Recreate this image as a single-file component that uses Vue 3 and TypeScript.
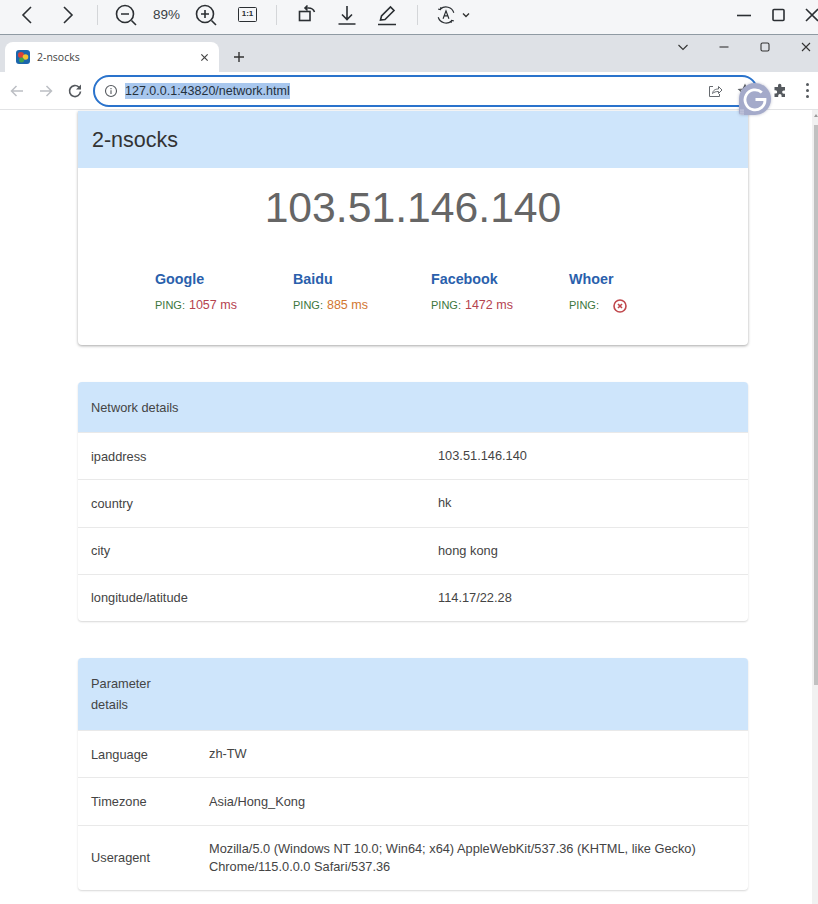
<script setup lang="ts">
interface PingTarget {
  name: string
  ms: number | null
  tone: 'slow' | 'mid' | 'fail'
}

interface DetailRow {
  label: string
  value: string
}

const ip = '103.51.146.140'

const targets: PingTarget[] = [
  { name: 'Google', ms: 1057, tone: 'slow' },
  { name: 'Baidu', ms: 885, tone: 'mid' },
  { name: 'Facebook', ms: 1472, tone: 'slow' },
  { name: 'Whoer', ms: null, tone: 'fail' },
]

const networkRows: DetailRow[] = [
  { label: 'ipaddress', value: ip },
  { label: 'country', value: 'hk' },
  { label: 'city', value: 'hong kong' },
  { label: 'longitude/latitude', value: '114.17/22.28' },
]

const paramRows: DetailRow[] = [
  { label: 'Language', value: 'zh-TW' },
  { label: 'Timezone', value: 'Asia/Hong_Kong' },
  {
    label: 'Useragent',
    value:
      'Mozilla/5.0 (Windows NT 10.0; Win64; x64) AppleWebKit/537.36 (KHTML, like Gecko) Chrome/115.0.0.0 Safari/537.36',
  },
]
</script>

<template>
  <div class="screen">
    <!-- image viewer toolbar -->
    <div class="viewer-bar">
      <svg class="vb vb-back" viewBox="0 0 24 24"><path d="M16 4l-8 8 8 8" /></svg>
      <svg class="vb vb-fwd" viewBox="0 0 24 24"><path d="M8 4l8 8-8 8" /></svg>
      <i class="vb-div vb-div1"></i>
      <svg class="vb vb-zoomout" viewBox="0 0 24 24">
        <circle cx="11" cy="11" r="8.5" /><path d="M7 11h8M17.5 17.5l4.5 4.5" />
      </svg>
      <span class="vb-pct">89%</span>
      <svg class="vb vb-zoomin" viewBox="0 0 24 24">
        <circle cx="11" cy="11" r="8.5" /><path d="M7 11h8M11 7v8M17.5 17.5l4.5 4.5" />
      </svg>
      <span class="vb-actual">1:1</span>
      <i class="vb-div vb-div2"></i>
      <svg class="vb vb-rotate" viewBox="0 0 24 24">
        <rect x="5.500" y="8.500" width="10.500" height="9" /><path d="M11 5h3.500c3 0 5 1.200 6 4M13.500 2.500L11 5l2.500 2.500" />
      </svg>
      <svg class="vb vb-down" viewBox="0 0 24 24">
        <path d="M12 3v13M7 11.500l5 5 5-5M3.500 21h17" />
      </svg>
      <svg class="vb vb-pen" viewBox="0 0 24 24">
        <path d="M5.500 17l1-4L15.500 4l3.500 3.500-9 9zM3 21.500h18" />
      </svg>
      <i class="vb-div vb-div3"></i>
      <svg class="vb vb-read" viewBox="0 0 24 24">
        <path class="thin" d="M20.500 9.500A9 9 0 0 0 6 5.500M3.500 14.500A9 9 0 0 0 18 18.500M3.500 5.500L6 6l.5-2.500M20.500 18.500L18 18l-.5 2.500" />
        <path class="thin" d="M8.800 16L12 7.500l3.200 8.500M10 13h4" />
      </svg>
      <svg class="vb-chev" viewBox="0 0 10 10"><path d="M2 3.500l3 3 3-3" /></svg>
      <svg class="vb vb-min" viewBox="0 0 24 24"><path d="M5 12.500h14" /></svg>
      <svg class="vb vb-max" viewBox="0 0 24 24"><rect x="6" y="6.500" width="11" height="11" rx="1" /></svg>
      <svg class="vb vb-close" viewBox="0 0 24 24"><path d="M6 6l12 12M18 6L6 18" /></svg>
    </div>

    <!-- tab strip -->
    <div class="tabstrip">
      <div class="tab">
        <svg class="favicon" viewBox="0 0 14 14">
          <rect width="14" height="14" rx="3" fill="#1b66ad" />
          <circle cx="5" cy="5" r="3" fill="#d8403a" />
          <circle cx="9.500" cy="7" r="2.800" fill="#f2c230" />
          <circle cx="5.500" cy="10" r="2.500" fill="#3fa34d" />
        </svg>
        <span class="tab-title">2-nsocks</span>
        <svg class="tab-x" viewBox="0 0 10 10"><path d="M1.500 1.500l7 7M8.500 1.500l-7 7" /></svg>
      </div>
      <svg class="tab-plus" viewBox="0 0 12 12"><path d="M6 1v10M1 6h10" /></svg>
      <svg class="win win-list" viewBox="0 0 12 12"><path d="M1.500 4l4.500 4.500L10.500 4" /></svg>
      <svg class="win win-min" viewBox="0 0 12 12"><path d="M1.500 6h9" /></svg>
      <svg class="win win-max" viewBox="0 0 12 12"><rect x="2" y="2" width="8" height="8" rx="1.500" /></svg>
      <svg class="win win-close" viewBox="0 0 12 12"><path d="M2 2l8 8M10 2l-8 8" /></svg>
    </div>

    <!-- address bar -->
    <div class="toolbar">
      <svg class="nav nav-back" viewBox="0 0 16 16"><path d="M14 8H2.500M7.500 3l-5 5 5 5" /></svg>
      <svg class="nav nav-fwd" viewBox="0 0 16 16"><path d="M2 8h11.500M8.500 3l5 5-5 5" /></svg>
      <svg class="nav nav-reload" viewBox="0 0 16 16">
        <path d="M13.500 8.500A5.500 5.500 0 1 1 11.800 4L13.500 5.700" /><path class="solid" d="M14 1.500V6.500H9z" />
      </svg>
      <div class="omnibox">
        <svg class="info" viewBox="0 0 14 14">
          <circle cx="7" cy="7" r="5.500" /><path d="M7 6.300v3.700M7 4v1.300" />
        </svg>
        <span class="url">127.0.0.1:43820/network.html</span>
        <svg class="share" viewBox="0 0 16 16">
          <path d="M6 3.500H2.500v10h10V11" /><path d="M5.500 10.500c.5-3.500 3-4.500 6-4.500V3.500L15 7l-3.500 3.500V8.500c-2.500 0-4.500.5-6 2z" />
        </svg>
        <svg class="star" viewBox="0 0 16 16"><path d="M8 2l1.800 4 4.200.4-3.200 2.800 1 4.200L8 11.200 4.200 13.400l1-4.200L2 6.400 6.200 6z" /></svg>
      </div>
      <svg class="puzzle" viewBox="0 0 16 16">
        <path d="M6 2.500a1.700 1.700 0 0 1 3.400 0V4h3.600v3.400h-1.200a1.700 1.700 0 0 0 0 3.400H13V14H9.600v-1.200a1.700 1.700 0 0 0-3.400 0V14H2.500v-3.400h1a1.700 1.700 0 0 0 0-3.400h-1V4H6z" />
      </svg>
      <div class="dots"><i></i><i></i><i></i></div>
    </div>

    <!-- floating G badge -->
    <div class="g-badge">
      <svg viewBox="0 0 32 32">
        <path d="M22.800 9.500A10 10 0 1 0 26 16.500h-9.500" />
        <g class="grip">
          <circle cx="2" cy="27" r=".6" /><circle cx="4" cy="27" r=".6" />
          <circle cx="2" cy="29" r=".6" /><circle cx="4" cy="29" r=".6" />
          <circle cx="2" cy="31" r=".6" /><circle cx="4" cy="31" r=".6" />
        </g>
      </svg>
    </div>

    <!-- page -->
    <div class="page">
      <main class="content">
        <section class="card card-main">
          <h1 class="main-title">2-nsocks</h1>
          <div class="big-ip">{{ ip }}</div>
          <div class="targets">
            <div v-for="t in targets" :key="t.name" class="target">
              <div class="target-name">{{ t.name }}</div>
              <div class="target-ping">
                <span class="ping-label">PING:</span>
                <span v-if="t.ms !== null" :class="['ping-val', t.tone]">{{ t.ms }} ms</span>
                <svg v-else class="ping-fail" viewBox="0 0 14 14">
                  <circle cx="7" cy="7" r="6" /><path d="M5 5l4 4M9 5l-4 4" />
                </svg>
              </div>
            </div>
          </div>
        </section>

        <section class="card card-table card-network">
          <div class="table-head">Network details</div>
          <div v-for="row in networkRows" :key="row.label" class="table-row">
            <div class="cell-label">{{ row.label }}</div>
            <div class="cell-value">{{ row.value }}</div>
          </div>
        </section>

        <section class="card card-table card-param">
          <div class="table-head"><div class="head-narrow">Parameter details</div></div>
          <div v-for="row in paramRows" :key="row.label" class="table-row">
            <div class="cell-label">{{ row.label }}</div>
            <div class="cell-value">{{ row.value }}</div>
          </div>
        </section>
      </main>
      <div class="scrollbar">
        <div class="scroll-arrow"></div>
        <div class="thumb"></div>
      </div>
    </div>
  </div>
</template>

<style>
html,
body {
  margin: 0;
  overflow: hidden;
  background: #fff;
}
</style>

<style scoped>
.screen {
  position: relative;
  width: 818px;
  height: 904px;
  overflow: hidden;
  display: flex;
  flex-direction: column;
  font-family: 'Liberation Sans', Arial, sans-serif;
  color: #444;
}

svg {
  display: block;
  flex-shrink: 0;
  fill: none;
}

/* viewer toolbar */
.viewer-bar {
  height: 34px;
  flex-shrink: 0;
  box-sizing: content-box;
  display: flex;
  align-items: center;
  height: 29px;
  padding: 0 0 5px 15px;
  background: #f5f6f8;
  border-bottom: 1px solid #8f9aa3;
}

.vb {
  width: 24px;
  height: 24px;
  stroke: #2b2f33;
  stroke-width: 1.600;
}

.vb-fwd { margin-left: 17px; }
.vb-div { width: 1px; height: 20px; background: #d4d6d9; }
.vb-div1 { margin-left: 17px; }
.vb-zoomout { margin-left: 16px; }
.vb-pct {
  margin-left: 15px;
  width: 28px;
  font-size: 13.500px;
  color: #3a3f44;
}
.vb-zoomin { margin-left: 13px; }
.vb-actual {
  margin-left: 20px;
  box-sizing: border-box;
  width: 19px;
  height: 15px;
  border: 1.500px solid #2b2f33;
  border-radius: 1.500px;
  font-size: 8px;
  font-weight: 700;
  line-height: 12px;
  text-align: center;
  color: #2b2f33;
}
.vb-div2 { margin-left: 19px; }
.vb-rotate { margin-left: 17px; }
.vb-down { margin-left: 17px; }
.vb-pen { margin-left: 16px; }
.vb-div3 { margin-left: 18px; }
.vb-read { margin-left: 17px; width: 22px; height: 22px; }
.vb-read .thin { stroke-width: 1.300; }
.vb-chev {
  width: 10px;
  height: 10px;
  margin-left: 4px;
  stroke: #333;
  stroke-width: 1.400;
}
.vb-min { margin-left: auto; }
.vb-max { margin-left: 11px; }
.vb-close { margin-left: 9px; margin-right: -6px; }

/* tab strip */
.tabstrip {
  height: 37px;
  flex-shrink: 0;
  display: flex;
  align-items: flex-end;
  background: #dee1e6;
  padding-left: 5px;
}

.tab {
  width: 214px;
  height: 30px;
  box-sizing: border-box;
  display: flex;
  align-items: center;
  padding: 0 10px 0 11px;
  background: #fff;
  border-radius: 8px 8px 0 0;
}

.favicon { width: 14px; height: 14px; }
.tab-title {
  margin-left: 7px;
  font-family: 'Open Sans', 'Liberation Sans', sans-serif;
  font-size: 10.500px;
  color: #444;
}
.tab-x {
  margin-left: auto;
  width: 9px;
  height: 9px;
  stroke: #444;
  stroke-width: 1.300;
}

.tab-plus {
  width: 12px;
  height: 12px;
  margin: 0 0 9px 14px;
  stroke: #333;
  stroke-width: 1.400;
}

.win {
  width: 12px;
  height: 12px;
  align-self: flex-start;
  margin-top: 6px;
  stroke: #333;
  stroke-width: 1.100;
}
.win-list { margin-left: auto; }
.win-min { margin-left: 29px; }
.win-max { margin-left: 29px; }
.win-close { margin-left: 29px; margin-right: 6px; }

/* address bar */
.toolbar {
  height: 38px;
  flex-shrink: 0;
  box-sizing: border-box;
  display: flex;
  align-items: center;
  padding-left: 9px;
  background: #fff;
  border-bottom: 1px solid #e2e3e5;
}

.nav {
  width: 16px;
  height: 16px;
  stroke: #bcbfc4;
  stroke-width: 1.500;
}
.nav-fwd { margin-left: 13px; }
.nav-reload { margin-left: 13px; stroke: #55595e; stroke-width: 1.700; }
.nav-reload .solid { fill: #55595e; stroke: none; }

.omnibox {
  width: 665px;
  height: 32px;
  margin-left: 10px;
  box-sizing: border-box;
  display: flex;
  align-items: center;
  padding-left: 9px;
  border: 2px solid #2a73cc;
  border-radius: 16px;
  background: #fff;
}

.info {
  width: 14px;
  height: 14px;
  stroke: #55595e;
  stroke-width: 1.100;
}

.url {
  margin-left: 7px;
  padding: 1px 0;
  background: #a8c7ee;
  font-size: 12.500px;
  color: #24303c;
}

.share {
  margin-left: auto;
  width: 16px;
  height: 16px;
  stroke: #666a6f;
  stroke-width: 1;
}

.star {
  width: 16px;
  height: 16px;
  margin: 0 3px 0 14px;
  stroke: #55595e;
  stroke-width: 1.200;
}

.puzzle {
  width: 16px;
  height: 16px;
  margin-left: 14px;
  fill: #55595e;
}

.dots {
  margin-left: 18px;
  display: flex;
  flex-direction: column;
  gap: 3px;
}
.dots i {
  width: 3px;
  height: 3px;
  border-radius: 50%;
  background: #55595e;
}

.g-badge {
  position: absolute;
  left: 739px;
  top: 83px;
  width: 32px;
  height: 32px;
  border-radius: 50% 50% 50% 3px;
  background: #a4aaca;
  box-shadow: 0 0 3px rgba(90, 95, 130, 0.4);
}
.g-badge svg {
  width: 32px;
  height: 32px;
  stroke: #fff;
  stroke-width: 2.800;
}
.g-badge .grip {
  fill: #fff;
  stroke: none;
}

/* page */
.page {
  flex: 1;
  min-height: 0;
  display: flex;
}

.content {
  flex: 1;
  min-width: 0;
  padding: 1px 0 0 78px;
}

.scrollbar {
  width: 6px;
  background: #f1f1f1;
}
.scroll-arrow {
  width: 0;
  height: 0;
  margin: 4px 0 0 2px;
  border: 2px solid transparent;
  border-top-width: 0;
  border-bottom: 3px solid #9a9a9a;
}
.thumb {
  height: 560px;
  margin: 8px 0 0 2px;
  background: #c1c1c1;
}

.card {
  width: 670px;
  background: #fff;
  border-radius: 4px;
  overflow: hidden;
}

.card-main {
  height: 234px;
  border-radius: 0 0 4px 4px;
  box-shadow: 0 1px 3px rgba(0, 0, 0, 0.35);
}

.main-title {
  height: 57px;
  margin: 0;
  padding-left: 14px;
  background: #cee5fb;
  font-size: 21.500px;
  font-weight: 400;
  line-height: 58px;
  color: #333;
}

.big-ip {
  margin-top: 10px;
  text-align: center;
  font-size: 42.700px;
  line-height: 58px;
  color: #666;
}

.targets {
  display: grid;
  grid-template-columns: repeat(4, 138px);
  margin: 33px 0 0 77px;
}

.target-name {
  font-size: 14.300px;
  font-weight: 700;
  line-height: 20px;
  color: #2a5fac;
}

.target-ping {
  display: flex;
  align-items: center;
  gap: 4px;
  margin-top: 8px;
  height: 16px;
  font-size: 12.500px;
}

.ping-label {
  font-size: 11px;
  color: #3c763d;
}

.ping-val.slow { color: #b5434f; }
.ping-val.mid { color: #d2762f; }

.ping-fail {
  width: 14px;
  height: 14px;
  margin: 2px 0 0 10px;
  stroke: #c0474c;
  stroke-width: 1.600;
}

.card-table {
  box-shadow: 0 1px 2px rgba(0, 0, 0, 0.16);
}
.card-network { margin-top: 37px; }
.card-param { margin-top: 37px; }

.table-head {
  padding: 15px 13px 14px;
  background: #cee5fb;
  font-size: 12.800px;
  line-height: 21px;
  color: #444;
}
.card-param .table-head { padding-bottom: 15px; }

.head-narrow { width: 90px; }

.table-row {
  display: grid;
  align-items: center;
  padding-left: 13px;
  border-top: 1px solid #e9e9e9;
  font-size: 12.800px;
  color: #444;
}

.card-network .table-row { grid-template-columns: 347px 1fr; }
.card-param .table-row { grid-template-columns: 118px 1fr; }

.cell-value {
  padding: 14.150px 30px 14.150px 0;
  line-height: 18px;
}
</style>
